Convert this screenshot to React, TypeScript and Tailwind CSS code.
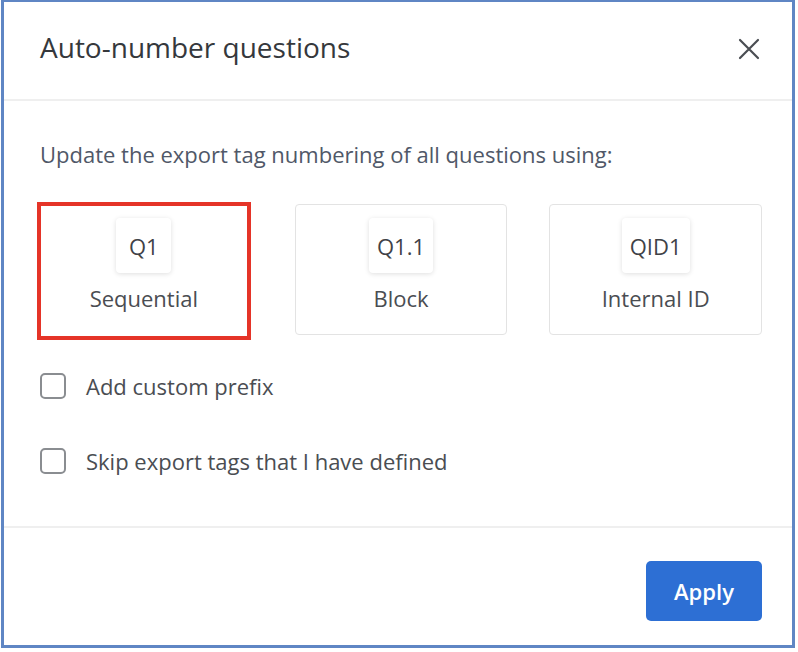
import React from "react";

const font = { fontFamily: '"Open Sans", "Noto Sans", sans-serif' };

function Card({ tag, label, selected }: { tag: string; label: string; selected?: boolean }) {
  return (
    <div
      className={
        selected
          ? "h-[138px] -mt-[2px] -ml-[3px] mr-[2px] border-[4px] border-[#e53428] bg-white flex flex-col items-center pt-[12px]"
          : "h-[131px] rounded-[4px] border border-[#e3e3e3] bg-white flex flex-col items-center pt-[13px]"
      }
    >
      <div className="h-[55px] min-w-[55px] px-[8px] rounded-[4px] bg-white shadow-[0_1px_5px_rgba(0,0,0,0.13)] flex items-center justify-center text-[22px] leading-[26px] text-[#3f4247]">
        {tag}
      </div>
      <div className="mt-[12px] text-[22px] leading-[26px] text-[#4a4d52]">{label}</div>
    </div>
  );
}

function Check({ label }: { label: string }) {
  return (
    <div className="flex items-center h-[28px]">
      <div className="w-[26px] h-[26px] rounded-[5px] border-[2px] border-[#8a8d91] bg-white" />
      <div className="ml-[20px] text-[22px] leading-[26px] text-[#4a4d52]">{label}</div>
    </div>
  );
}

export default function App() {
  return (
    <div className="w-[798px] h-[652px] bg-white" style={font}>
      <div className="ml-[1px] w-[794px] h-[648px] border-l-[3px] border-r-[3px] border-b-[3px] border-t-[2px] border-[#5f86c4] bg-white flex flex-col">
        <div className="h-[99px] flex items-center justify-between pl-[36px] pr-[32px] border-b-[2px] border-[#efefef]">
          <div className="text-[28px] leading-[34px] text-[#35383c] -mt-[7px]">Auto-number questions</div>
          <svg width="22" height="22" viewBox="0 0 22 22" className="-mt-[3px]">
            <path d="M2 2 L20 20 M20 2 L2 20" stroke="#4a4d52" strokeWidth="2.2" strokeLinecap="round" />
          </svg>
        </div>
        <div className="h-[427px] pl-[36px] pr-[30px] pt-[42px] border-b-[2px] border-[#efefef]">
          <div className="text-[22px] text-[#505868] leading-[22px]">
            Update the export tag numbering of all questions using:
          </div>
          <div className="mt-[39px] grid grid-cols-3 gap-[42px]">
            <Card tag="Q1" label="Sequential" selected />
            <Card tag="Q1.1" label="Block" />
            <Card tag="QID1" label="Internal ID" />
          </div>
          <div className="mt-[32px]">
            <Check label="Add custom prefix" />
          </div>
          <div className="mt-[47px]">
            <Check label="Skip export tags that I have defined" />
          </div>
        </div>
        <div className="flex-1 flex items-start justify-end pr-[30px] pt-[33px]">
          <button className="w-[116px] h-[60px] rounded-[5px] bg-[#2d6fd4] text-white text-[22px] font-semibold">
            Apply
          </button>
        </div>
      </div>
    </div>
  );
}
